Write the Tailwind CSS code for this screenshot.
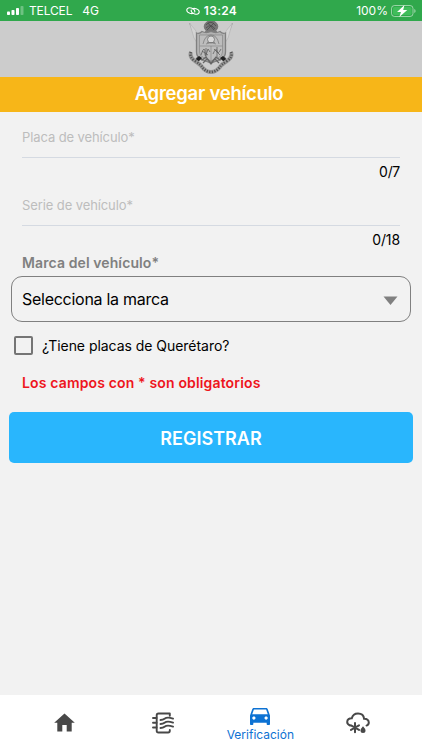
<!DOCTYPE html>
<html lang="es">
<head>
    <meta charset="UTF-8">
    <meta name="viewport" content="width=device-width, initial-scale=1.0">
    <title>Agregar vehículo</title>
    <script src="https://cdn.jsdelivr.net/npm/@tailwindcss/browser@4"></script>
</head>
<body class="bg-[#f2f2f2] font-['Inter',sans-serif] text-black">
    <div class="flex flex-col w-[422px] h-[750px] overflow-hidden">
        <!-- Status bar -->
        <div class="grid grid-cols-3 items-center h-[21px] shrink-0 bg-[#30a84c] text-white text-[12px] leading-[21px] pl-[7px] pr-[6px]">
            <div class="flex items-center">
                <svg class="w-[17px] h-[9px] mr-[5px]" viewBox="0 0 17 9" fill="currentColor">
                    <rect x="0" y="5.5" width="3" height="3.5" rx=".8"/>
                    <rect x="4.5" y="4" width="3" height="5" rx=".8"/>
                    <rect x="9" y="2" width="3" height="7" rx=".8"/>
                    <rect x="13.5" y="0" width="3" height="9" rx=".8" opacity=".3"/>
                </svg>
                <span class="tracking-[-.15px]">TELCEL</span>
                <span class="ml-[10px]">4G</span>
            </div>
            <div class="flex items-center justify-center">
                <svg class="w-[14px] h-[10px] mr-1" viewBox="0 0 14 10" fill="none" stroke="currentColor" stroke-width="1.1" stroke-linecap="round">
                    <path d="M7.500 7.300Q6 8 3.800 7.300C1.500 6.500.5 5 .9 3.500S3 1.300 5.300 2 9.300 4.500 8.700 6"/>
                    <path d="M6.500 2.700Q8 2 10.200 2.700C12.500 3.500 13.500 5 13.100 6.500S11 8.700 8.700 8 4.700 5.500 5.300 4"/>
                </svg>
                <span class="font-semibold tracking-[.3px]">13:24</span>
            </div>
            <div class="flex items-center justify-end">
                <span class="mr-[3px]">100%</span>
                <svg class="w-[25px] h-[12px]" viewBox="0 0 25 12">
                    <rect x=".5" y=".5" width="21.500" height="11" rx="3" fill="none" stroke="#fff" stroke-opacity=".5"/>
                    <rect x="2" y="2" width="18.500" height="8" rx="1.700" fill="#40bd5b"/>
                    <path d="M23.300 4v4q1.300-.6 1.300-2t-1.300-2z" fill="#fff" fill-opacity=".55"/>
                    <path d="M13.500 0 6 7h4L8.300 12l8-7h-4.100z" fill="#fff"/>
                </svg>
            </div>
        </div>

        <!-- Coat of arms -->
        <div class="flex justify-center h-14 shrink-0 bg-[#ccc]">
            <svg class="w-[46px] h-[54px]" viewBox="0 0 46 54" fill="none" stroke="#555" stroke-width=".7">
                <path d="M1.500 2 17 41M44.500 2 29 41" stroke="#888"/>
                <path d="M1.500 2 8 10l3 15-5-8zM44.500 2 38 10l-3 15 5-8z" fill="#d4d4d4" stroke="#aaa" stroke-width=".5"/>
                <ellipse cx="23" cy="5.500" rx="6.800" ry="5.800" fill="#777" stroke="#666"/>
                <path d="M18 4q5-6 10 1M18 7q5-5 9 1M20 2l6 7M26 2l-7 7M17 10q6 4 12 0" stroke="#444"/>
                <path d="M8.500 12q3 1 5.500-1.500 4 2 9 0 5 2 9 0 2.500 2.500 5.500 1.500v19q0 5-5 7.500L23 42l-9.500-3.500q-5-2.500-5-7.500z" fill="#b3b3b3" stroke="#808080" stroke-width="1.300"/>
                <path d="M11.500 14h23v17q0 4-4 5.500L23 40l-7.500-3.500q-4-1.500-4-5.500zM11.500 25h23M23 25v15" fill="#bdbdbd" stroke="#888"/>
                <circle cx="23" cy="18.500" r="3.500" fill="#d8d8d8" stroke="#666"/>
                <path d="M15 23q2-9 8-9t8 9M18 23q5-3 10 0M19 21.500h8" stroke="#777"/>
                <path d="M13 34q2-6 3-6t1 5 3-5l2 3M14 30l6 4M18 27v9" stroke="#555"/>
                <path d="M25 33q3-7 4-3t4-2M26 28l6 6M29 26v10" stroke="#555"/>
                <path d="M8 38q3-4 6 1l4-3 5 6 5-6 4 3q3-5 6-1M15 42l4-4 4 5 4-5 4 4" stroke="#666" stroke-width="1.200"/>
                <path d="m6 40 5-5 3 2-5 5zM40 40l-5-5-3 2 5 5z" fill="#222" stroke="none"/>
                <path d="M3 31q-2 5 4 9t7 6q4 5 9 5t9-5q1-2 7-6t4-9" stroke="#999" stroke-width="4"/>
                <path d="M3 31q-2 5 4 9t7 6q4 5 9 5t9-5q1-2 7-6t4-9" stroke="#555" stroke-width="2.600" stroke-dasharray="1.200 1.400"/>
            </svg>
        </div>

        <h1 class="h-[35px] shrink-0 bg-[#f7b618] pr-1 text-white text-center text-[18.5px] leading-[33px] font-semibold tracking-[-.25px]">Agregar vehículo</h1>

        <!-- Form -->
        <main class="grow">
            <div class="px-[22px]">
                <div class="h-[46px] border-b border-[#d5dae2] pt-[15px] text-[13px] leading-[20px] tracking-[-.1px] text-[#bdbdbd]">Placa de vehículo*</div>
                <div class="h-[22px] pt-1 text-right text-[14px] leading-[20px] tracking-[-.3px]">0/7</div>
                <div class="h-[46px] border-b border-[#d5dae2] pt-[15px] text-[13px] leading-[20px] tracking-[-.1px] text-[#bdbdbd]">Serie de vehículo*</div>
                <div class="h-[26px] pt-1 text-right text-[14px] leading-[20px] tracking-[-.1px]">0/18</div>
                <div class="h-[24px] text-[14px] leading-[21px] font-semibold tracking-[.1px] text-[#808080]">Marca del vehículo*</div>
            </div>
            <div class="flex items-center justify-between mx-[11px] h-[46px] border border-[#808080] rounded-[11px] pl-[10px] pr-[12px] text-[16px]">
                <span class="tracking-[-.27px]">Selecciona la marca</span>
                <svg class="w-[15px] h-[9px] mt-[2px]" viewBox="0 0 15 9" fill="#808080"><path d="M.5.5h14L7.500 9z"/></svg>
            </div>
            <div class="flex items-center h-[20px] mt-[13px] pl-[14px] text-[14px]">
                <span class="size-[19px] border-2 border-[#757575] rounded-[2px] mr-[9px]"></span>
                <span class="tracking-[-.04px]">¿Tiene placas de Querétaro?</span>
            </div>
            <p class="mt-[18px] pl-[22px] text-[14px] leading-[20px] font-semibold tracking-[.15px] text-[#ee1520]">Los campos con * son obligatorios</p>
            <button class="block w-[404px] h-[51px] mt-[19px] mx-auto pt-[2px] rounded-[5px] bg-[#29b6fd] text-white text-[18px] font-semibold">REGISTRAR</button>
        </main>

        <!-- Bottom navigation -->
        <nav class="flex h-[55px] shrink-0 bg-white pl-[16px] pr-[15px] text-[#484848]">
            <div class="flex flex-1 items-center justify-center">
                <svg class="w-[21px] h-[19px]" viewBox="0 0 21 19" fill="currentColor"><path d="M10.500.5.2 9.700h3.100v8.800h5V12h4.400v6.500h5V9.700h3.100z"/></svg>
            </div>
            <div class="flex flex-1 items-center justify-center">
                <svg class="w-[22px] h-[22px]" viewBox="0 0 22 22" fill="none" stroke="currentColor" stroke-width="1.900" stroke-linecap="round" stroke-linejoin="round">
                    <path d="M17.800 3.700V1.500H6.500q-1.800 0-1.800 1.800v15.400q0 1.800 1.800 1.800h9.700q1.600 0 1.600-1.700v-.8"/>
                    <path d="M1 6h3.500M1 10.800h3.500M1 15.500h3.500"/>
                    <path d="M8.500 8q2.500 0 4-1.200t3.500-1.200 5 1M8.500 12q2.500 0 4-1.200t3.500-1.200 5 1M8.500 16q2.500 0 4-1.200t3.500-1.200 5 1"/>
                </svg>
            </div>
            <div class="flex flex-1 flex-col items-center pt-[13px] text-[#0d72d3]">
                <svg class="w-[20px] h-[18px]" viewBox="3 4 18 17" preserveAspectRatio="none" fill="currentColor"><path d="M18.920 5.010C18.720 4.420 18.160 4 17.500 4h-11c-.66 0-1.210.42-1.420 1.010L3 11v8c0 .55.450 1 1 1h1c.55 0 1-.45 1-1v-1h12v1c0 .55.450 1 1 1h1c.55 0 1-.45 1-1v-8l-2.080-5.990zM6.500 15c-.83 0-1.500-.67-1.500-1.500S5.670 12 6.500 12s1.500.670 1.500 1.500S7.330 15 6.500 15zm11 0c-.83 0-1.500-.67-1.500-1.500s.670-1.500 1.500-1.500 1.500.670 1.500 1.500-.67 1.500-1.500 1.500zM5 10l1.500-4.500h11L19 10H5z"/></svg>
                <span class="text-[12px] leading-[16px] mt-[1px]">Verificación</span>
            </div>
            <div class="flex flex-1 items-center justify-center">
                <svg class="w-[24px] h-[22px]" viewBox="0 0 24 22" fill="none" stroke="currentColor" stroke-width="2" stroke-linecap="round">
                    <path d="M4 13.500Q1.200 12.300 1.200 10C1.200 7.500 3.300 6.200 5.800 6.300 6.500 3.300 9 1.500 12 1.500c3.500 0 5.800 2.200 6.100 5.300 2.900-.1 4.700 1.500 4.700 3.800 0 1.500-.9 2.600-2.300 3"/>
                    <path d="M9 11v9.200M5 13.300l8 4.600M13 13.300l-8 4.600" stroke-width="2"/>
                    <path d="M17 14.200q2.500 2.600 2.500 4.200a2.500 2.500 0 0 1-5 0q0-1.600 2.500-4.200z" fill="currentColor" stroke="none"/>
                </svg>
            </div>
        </nav>
    </div>
</body>
</html>
